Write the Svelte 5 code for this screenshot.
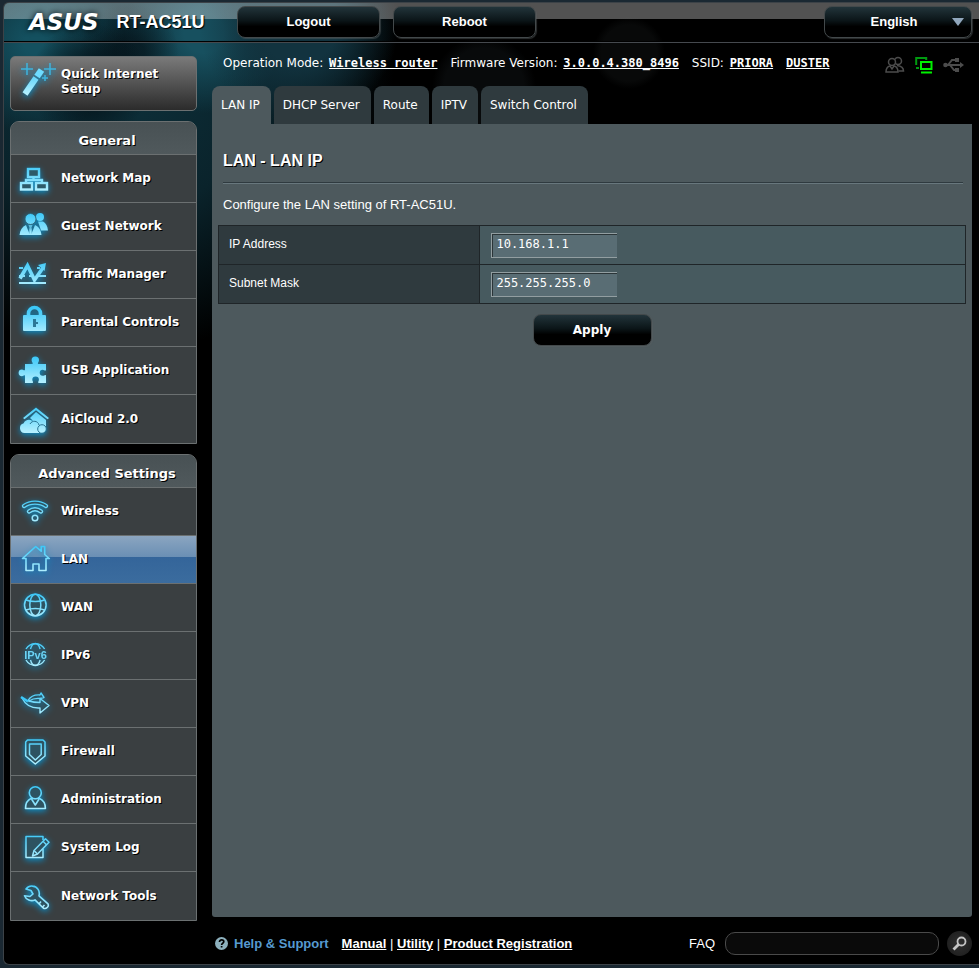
<script>
  let ip = "10.168.1.1";
  let mask = "255.255.255.0";
  let language = "English";
  let query = "";

  const tabs = ["LAN IP", "DHCP Server", "Route", "IPTV", "Switch Control"];
  let activeTab = "LAN IP";
  let activePage = "LAN";

  const CYAN = "url(#cyan)";

  const general = [
    {
      label: "Network Map",
      icon: `<g fill="#2d5a69" stroke="${CYAN}" stroke-width="2.400">
        <rect x="12" y="14" width="11" height="8"/><rect x="5" y="28" width="11" height="6.500"/><rect x="20" y="28" width="11" height="6.500"/>
        <path d="M17.500 22v3M10 28v-3h16v3" fill="none"/></g>`,
    },
    {
      label: "Guest Network",
      icon: `<g fill="${CYAN}"><circle cx="24" cy="14" r="4"/><path d="M22 18.500h5c3 1.500 4.500 5 5 9h-7z"/>
        <circle cx="14.500" cy="16" r="5.500" stroke="#2d5a69" stroke-width=".8"/><path d="M3.500 32c.6-5 2.800-8.500 6.500-10l3.500 9 1-5.500 1 5.500 3.500-9c3.700 1.500 6 5 6.500 10z"/>
        <path d="M12.500 22h4l-1 2.500 1.200 5.500-2.200 2-2.200-2 1.200-5.500z" opacity=".7"/></g>`,
    },
    {
      label: "Traffic Manager",
      icon: `<g fill="none" stroke="${CYAN}"><path d="M3 17h4M3 25h6M13 25h3M22 25h8M3 32h27M21 17h3" stroke-width="2"/>
        <path d="M4 27.500l7.500-13 7 14.500 9-13" stroke-width="3.600"/></g><path d="M22 14l8-2-1.500 8z" fill="${CYAN}"/>`,
    },
    {
      label: "Parental Controls",
      icon: `<path d="M12.500 17v-2.500a6 6 0 0 1 12 0V17" fill="none" stroke="${CYAN}" stroke-width="3.600"/>
        <rect x="7" y="16" width="23" height="16" rx="1" fill="${CYAN}"/><path d="M17 20h3v3h2v2h-2v3h-3z" fill="#2c7896"/>`,
    },
    {
      label: "USB Application",
      icon: `<path fill="${CYAN}" d="M9 17h7.500c1-1-.9-2-.9-3.800a3.700 3.700 0 0 1 7.400 0c0 1.800-1.900 2.800-.9 3.800H30v6.200c-1 .9-2-.5-3.300-.5a3 3 0 0 0 0 6c1.300 0 2.300-1.400 3.300-.5V36h-7.500c-1-1 .4-1.800.4-3.200a3.300 3.300 0 0 0-6.600 0c0 1.400 1.400 2.200.4 3.200H9v-7.500c-1-.8-1.800.7-3 .7a3.400 3.400 0 0 1 0-6.800c1.200 0 2 1.500 3 .7z"/>`,
    },
    {
      label: "AiCloud 2.0",
      icon: `<g fill="${CYAN}"><path d="M20 11.500l13 10.500-1.500 1.300L20 14.300 8.500 23.300 7 22z"/><path d="M20 16l10 8v6h-7l-9-8z"/>
        <path d="M8.500 37a5 5 0 0 1-.8-9.800c1-3 5.300-4.500 8.300-2.500 2.600-.9 6.400.6 6.800 3.600h3a4.300 4.300 0 0 1 0 8.700z"/></g>
        <g fill="none" stroke="#287493"><path d="M14 28c2-4 8-3.500 9 1"/><circle cx="26" cy="33" r="4.300"/></g>`,
    },
  ];

  const advanced = [
    {
      label: "Wireless",
      icon: `<g fill="none" stroke-linecap="round"><path d="M8 18c6-4.500 16-4.500 22 0M13 23.500c4-3 8-3 12 0" stroke="${CYAN}" stroke-width="4.400"/>
        <path d="M8 18c6-4.500 16-4.500 22 0M13 23.500c4-3 8-3 12 0" stroke="#2d5361" stroke-width="1.600"/>
        <circle cx="19" cy="30" r="2.800" stroke="${CYAN}" stroke-width="1.500"/></g>`,
    },
    {
      label: "LAN",
      icon: `<path d="M6.500 22.500l13.200-12 5.500 4.700V10.500h3.500v8l4.600 4H30v12h-7V28h-6v6.500h-7v-12z" fill="none" stroke="${CYAN}" stroke-width="1.600" stroke-linejoin="round"/>`,
    },
    {
      label: "WAN",
      icon: `<g fill="#2d5361" stroke="${CYAN}" stroke-width="1.500"><circle cx="19.300" cy="21" r="10.800"/><ellipse cx="19.300" cy="21" rx="5.500" ry="10.800"/>
        <path d="M10 16c5 2 13.600 2 18.600 0M10 26c5-2 13.600-2 18.600 0" fill="none"/></g>`,
    },
    {
      label: "IPv6",
      icon: `<g fill="none" stroke="${CYAN}" stroke-width="1.400"><path d="M10 17a10.800 10.800 0 0 1 18.600 0M10 28a10.800 10.800 0 0 0 18.600 0"/>
        <path d="M14.500 17c.8-3 2.600-5.500 4.800-5.500s4 2.500 4.800 5.500M14.500 28c.8 3 2.600 5.500 4.800 5.500s4-2.500 4.800-5.500"/></g>
        <text x="19.500" y="26.500" font-size="11" font-weight="bold" font-family="Liberation Sans, sans-serif" text-anchor="middle" fill="#6bd3f5">IPv6</text>`,
    },
    {
      label: "VPN",
      icon: `<g fill="none" stroke="${CYAN}" stroke-width="1.400" stroke-linejoin="round">
        <path d="M6 18c4 8 10 10.500 18 10v5l9-7.500-9-7v4c-5 0-8-.5-11-1.500"/>
        <path d="M12 20.500c2.500-4 6.500-6 12-5.500l1-2 3 4.500-4 1c-5-.5-8 .5-11 2.500z"/></g>
        <path d="M5 17l7 4.500" stroke="#3cc8f8" stroke-width="2.600"/>`,
    },
    {
      label: "Firewall",
      icon: `<g fill="#2d5361" stroke="${CYAN}" stroke-width="1.500" stroke-linejoin="round"><path d="M11.500 12h15.500l2 2v14L19.300 36 9.700 28V14z"/><path d="M13.500 16h11.700v10.500L19.300 32l-5.800-5.500z"/></g>`,
    },
    {
      label: "Administration",
      icon: `<g fill="#2d5361" stroke="${CYAN}" stroke-width="1.600" stroke-linejoin="round"><path d="M9.500 32.500c0-5 2-8.500 5.500-10h8.600c3.500 1.500 5.800 5 5.800 10z"/>
        <circle cx="19.300" cy="16.700" r="6"/><path d="M15.500 23l3.800 6 3.800-6" fill="none"/></g>`,
    },
    {
      label: "System Log",
      icon: `<g fill="#2d5361" stroke="${CYAN}" stroke-width="1.500" stroke-linejoin="round"><path d="M27 16v-3.500H10v21h17V25"/>
        <path d="M16.500 32l1.500-5.500L29.500 14.800l3.500 3.400L21.500 30z"/><path d="M27 17.300l3.500 3.400M18 26.500l3.500 3.500"/></g>`,
    },
    {
      label: "Network Tools",
      icon: `<g fill="#2d5361" stroke="${CYAN}" stroke-width="1.600" stroke-linejoin="round"><path d="M10 16l5 1.500 2 3.500-3 2.500-5.500-.8c1.500 4 6.500 6 10.500 4.200l8.500 8.300c2.500 1.200 5.800-1.600 4.500-4.400l-9-8c1.200-4.500-1.500-9.300-6.500-9.700-3.500-.4-5 1-6.500 2.900z"/><path d="M25 28.500l-2 2.500M28.500 32l-2 2" fill="none"/></g>`,
    },
  ];

  const menus = [
    { title: "General", items: general },
    { title: "Advanced Settings", items: advanced },
  ];
</script>

<div class="shell">
  <header>
    <div class="brand">
      <span class="logo">ASUS</span>
      <span class="model">RT-AC51U</span>
    </div>
    <button class="btn top" type="button">Logout</button>
    <button class="btn top" type="button">Reboot</button>
    <div class="language">
      <select class="btn" aria-label="Language" bind:value={language}>
        <option>English</option>
      </select>
      <svg class="arrow" width="12" height="8" viewBox="0 0 12 8"><path d="M0 0h12L6 8z" fill="#91a7bd" /></svg>
    </div>
  </header>

  <div class="page">
    <aside>
      <a class="quick" href="#qis">
        <svg class="icon" width="40" height="47" viewBox="0 0 40 47">
          <defs>
            <linearGradient id="cyan" gradientUnits="userSpaceOnUse" x1="0" y1="10" x2="0" y2="36">
              <stop offset="0" stop-color="#3cc8f8" />
              <stop offset="1" stop-color="#b4f0ff" />
            </linearGradient>
          </defs>
          <g fill="none">
            <path d="M9 36L20 20" stroke="url(#cyan)" stroke-width="6" />
            <path d="M21 18.500L25.500 12" stroke-width="6.500" stroke="#6fdcff" />
            <path d="M11 5v12M5 11h12M34 5v12M28 11h12M29 17v6M26 20h6" stroke="#3fb4de" stroke-width="1.500" />
          </g>
        </svg>
        <span>Quick Internet Setup</span>
      </a>

      {#each menus as menu}
        <nav class="menu" aria-label={menu.title}>
          <h2>{menu.title}</h2>
          {#each menu.items as item}
            <a href="#menu" class:active={activePage === item.label} on:click|preventDefault={() => (activePage = item.label)}>
              <svg class="icon" width="36" height="47" viewBox="0 0 36 47">{@html item.icon}</svg>
              <span>{item.label}</span>
            </a>
          {/each}
        </nav>
      {/each}
    </aside>

    <main>
      <div class="info">
        <span>Operation Mode: <a href="#mode">Wireless router</a></span>
        <span>Firmware Version: <a href="#firmware">3.0.0.4.380_8496</a></span>
        <span>SSID: <a href="#ssid">PRIORA</a></span>
        <a href="#ssid5">DUSTER</a>
        <div class="status">
          <svg width="20" height="18" viewBox="0 0 20 18" fill="#000" stroke="#4c4c4c" stroke-width="1.500">
            <path d="M12 9.500c4 .5 6.500 2.500 6.500 5.500h-5" /><circle cx="13" cy="5" r="3.500" />
            <path d="M1 16c0-3.500 1.500-5.500 4-6h4c2.500.5 4 2.500 4 6z" /><circle cx="7" cy="6" r="3.500" /><path d="M5 10l2 3 2-3" />
          </svg>
          <svg width="18" height="18" viewBox="0 0 18 18" fill="none" stroke="#00f000">
            <path d="M1.200 9V2h10v2" stroke="#009a10" stroke-width="2" /><path d="M1 12h3" stroke="#009a10" stroke-width="2" />
            <rect x="6" y="6" width="10.500" height="7" stroke-width="2" /><path d="M6 16.500h11" stroke-width="2" />
          </svg>
          <svg width="21" height="18" viewBox="0 0 21 18" fill="none" stroke="#4c4c4c" stroke-width="2">
            <path d="M2 9h16M5 9l4-5h4M7 9l4 5h3" /><circle cx="2.500" cy="9" r="2.300" fill="#4c4c4c" stroke="none" />
            <path d="M17 6l4 3-4 3zM12 2h4v4h-4zM12 12h4v4h-4z" fill="#4c4c4c" stroke="none" />
          </svg>
        </div>
      </div>

      <nav class="tabs" aria-label="LAN">
        {#each tabs as tab}
          <a href="#tab" class:active={activeTab === tab} on:click|preventDefault={() => (activeTab = tab)}>{tab}</a>
        {/each}
      </nav>

      <form class="panel" on:submit|preventDefault>
        <h1>LAN - LAN IP</h1>
        <hr />
        <p>Configure the LAN setting of RT-AC51U.</p>
        <table>
          <tbody>
            <tr>
              <th scope="row"><label for="ip">IP Address</label></th>
              <td><input id="ip" type="text" bind:value={ip} /></td>
            </tr>
            <tr>
              <th scope="row"><label for="mask">Subnet Mask</label></th>
              <td><input id="mask" type="text" bind:value={mask} /></td>
            </tr>
          </tbody>
        </table>
        <button class="btn apply" type="submit">Apply</button>
      </form>

      <footer>
        <svg width="13" height="13" viewBox="0 0 13 13">
          <circle cx="6.500" cy="6.500" r="6.500" fill="#8db0bd" />
          <path d="M4.500 5c0-3 4.300-2.700 4.300-.2 0 1.500-2.200 1.500-2.200 3.200M6.600 9v1.600" fill="none" stroke="#000" stroke-width="1.700" />
        </svg>
        <strong>Help &amp; Support</strong>
        <span class="links">
          <a href="#manual">Manual</a> | <a href="#utility">Utility</a> | <a href="#register">Product Registration</a>
        </span>
        <label for="faq">FAQ</label>
        <input id="faq" type="text" bind:value={query} />
        <button class="search" type="button" aria-label="Search">
          <svg width="15" height="15" viewBox="0 0 15 15" fill="none" stroke="#c4c4c4">
            <circle cx="9.500" cy="5.500" r="4" stroke-width="1.800" /><path d="M6.500 8.500L1.500 13.500" stroke-width="2.800" />
          </svg>
        </button>
      </footer>
    </main>
  </div>
</div>

<style>
  :global(body) {
    margin: 0;
    background: #1a2832;
  }

  .shell {
    --sans: "Liberation Sans", Arial, sans-serif;
    --wide: "DejaVu Sans", Verdana, sans-serif;
    --mono: "DejaVu Sans Mono", "Lucida Console", monospace;
    --line: #6b7071;
    --panel: #4d595d;
    display: flex;
    flex-direction: column;
    box-sizing: border-box;
    min-height: calc(100vh - 5px);
    margin: 2px 0 3px 3px;
    border: 1px solid #3c4247;
    border-right: none;
    border-radius: 6px 0 0 6px;
    color: #fff;
    font: 13px var(--sans);
    background:
      radial-gradient(circle at 85px 80px, rgba(4, 16, 22, 0.85) 15px, transparent 60px),
      radial-gradient(circle at 125px 50px, rgba(4, 14, 20, 0.6) 15px, transparent 50px),
      radial-gradient(circle at 295px 20px, #12333f 40px, transparent 100px),
      radial-gradient(circle at 30px 40px, #14505f 10px, transparent 90px),
      radial-gradient(circle at 200px 30px, #17505f 20px, transparent 80px),
      radial-gradient(circle at 480px 85px, #080a0b 40px, transparent 52px),
      radial-gradient(circle at 625px 50px, #080909 28px, transparent 36px),
      radial-gradient(ellipse at 110px 60px, #0d323d 0, #0a232b 150px, transparent 280px),
      #000;
  }

  a {
    color: inherit;
  }

  header {
    display: flex;
    align-items: center;
    height: 37px;
    gap: 13px;
    padding: 0 7px 2px 25px;
    border-bottom: 1px solid #45494e;
    box-shadow: inset 0 -1px #000;
    border-radius: 5px 0 0 0;
    background: linear-gradient(rgba(255, 255, 255, 0.32) 16px, transparent 16px);
  }

  .brand {
    display: flex;
    align-items: center;
    gap: 18px;
    flex: 0 0 195px;
    font-weight: bold;
  }

  .logo {
    font: italic bold 23px/30px var(--wide);
    text-shadow: 0 0 6px #000;
  }

  .model {
    font-size: 18px;
    line-height: 30px;
    text-shadow: 1px 1px 1px #000;
  }

  .btn {
    box-sizing: border-box;
    height: 32px;
    padding: 0;
    border: 1px solid #43494b;
    border-radius: 8px;
    color: #fff;
    font: bold 13px var(--sans);
    text-align: center;
    background: linear-gradient(#22343a, #0b1518 45%, #000 65%);
    box-shadow: 1px 1px 1px rgba(90, 95, 98, 0.5);
    cursor: pointer;
  }

  .top {
    width: 143px;
  }

  .language {
    position: relative;
    margin-left: auto;
  }

  .language select {
    width: 148px;
    padding-right: 8px;
    appearance: none;
    text-align-last: center;
  }

  .arrow {
    position: absolute;
    top: 12px;
    right: 8px;
    pointer-events: none;
  }

  .page {
    display: flex;
    flex: 1;
    gap: 15px;
    padding: 0 7px 0 6px;
  }

  aside {
    display: flex;
    flex-direction: column;
    flex: 0 0 187px;
    gap: 10px;
    padding-top: 13px;
    font: bold 12px/15px var(--wide);
    text-shadow: 1px 1px 0 #000;
  }

  aside a {
    display: flex;
    align-items: center;
    color: #fff;
    text-decoration: none;
  }

  .icon {
    flex: none;
    overflow: visible;
    text-shadow: none;
    filter: drop-shadow(0 2px 3px #0a8fc8);
  }

  .quick {
    box-sizing: border-box;
    height: 55px;
    padding: 0 30px 4px 5px;
    gap: 5px;
    border: 1px solid #6b7071;
    border-radius: 5px;
    background: linear-gradient(#7a7a7a, #2b2b2b);
  }

  .menu {
    border: 1px solid var(--line);
    border-radius: 9px 9px 0 0;
    background: #3a3f41;
  }

  .menu h2 {
    margin: 0;
    padding: 5px 0 0 7px;
    border-radius: 8px 8px 0 0;
    font-size: 13px;
    line-height: 27px;
    text-align: center;
    background: linear-gradient(#485154, #50595c);
  }

  .menu a {
    height: 47px;
    padding-left: 5px;
    gap: 9px;
    border-top: 1px solid var(--line);
  }

  .menu a:last-child {
    height: 48px;
  }

  .menu a.active {
    background: linear-gradient(#8ba5c0, #6a8fb4 45%, #34659a 45%, #3b6c9e);
  }

  main {
    display: flex;
    flex-direction: column;
    flex: 1;
    min-width: 0;
  }

  .info {
    display: flex;
    align-items: center;
    box-sizing: border-box;
    height: 43px;
    gap: 13px;
    padding: 0 0 3px 11px;
    font: 12px var(--wide);
    white-space: nowrap;
  }

  .info a {
    font: bold 12px var(--mono);
  }

  .info span a {
    margin-left: 2px;
  }

  .status {
    display: flex;
    gap: 10px;
    margin-left: auto;
    padding: 4px 8px 0 0;
  }

  .tabs {
    display: flex;
    gap: 3px;
    font: 12px/38px var(--wide);
  }

  .tabs a {
    padding: 0 11px 0 9px;
    border-radius: 8px 8px 0 0;
    text-decoration: none;
    background: #2f3a3e;
  }

  .tabs a.active {
    background: var(--panel);
  }

  .panel {
    display: flex;
    flex-direction: column;
    flex: 1;
    padding: 27px 6px 20px;
    border-radius: 0 0 3px 3px;
    background: var(--panel);
  }

  h1 {
    margin: 0 5px;
    font-size: 16px;
    line-height: 20px;
    text-shadow: 1px 1px 0 #000;
  }

  hr {
    height: 1px;
    margin: 11px 3px 0 5px;
    border: none;
    border-top: 1px solid #2f3a3f;
    background: #68777d;
  }

  p {
    margin: 11px 5px 10px;
    line-height: 20px;
  }

  table {
    width: 100%;
    border-collapse: collapse;
    font-size: 12px;
  }

  th,
  td {
    height: 38px;
    padding: 0 11px;
    border: 1px solid #1f2528;
  }

  th {
    box-sizing: border-box;
    width: 35%;
    padding: 0 10px 2px;
    font-weight: normal;
    text-align: left;
    background: #2f3a3e;
  }

  td {
    background: #475a5f;
  }

  td input {
    display: block;
    box-sizing: border-box;
    width: 126px;
    height: 25px;
    padding: 0 4px 2px;
    border: solid #929ea1;
    border-width: 1px 0 1px 1px;
    color: #fff;
    font: 12px var(--mono);
    background: #596d74;
    box-shadow: inset 1px 1px #2b3538;
  }

  .apply {
    align-self: center;
    width: 119px;
    margin: 10px 0 0;
    font: bold 12px var(--wide);
  }

  footer {
    display: flex;
    align-items: center;
    height: 42px;
    padding: 5px 0 0 3px;
  }

  footer strong {
    margin: 0 13px 0 6px;
    color: #569ad0;
  }

  .links {
    flex: 1;
  }

  .links a {
    font-weight: bold;
  }

  footer input {
    box-sizing: border-box;
    width: 214px;
    height: 23px;
    margin: 0 8px 0 10px;
    padding: 0 10px;
    border: 1px solid #4a4a4a;
    border-radius: 10px;
    color: #fff;
    font: 13px var(--sans);
    background: #0a0a0a;
  }

  .search {
    display: grid;
    place-items: center;
    width: 25px;
    height: 25px;
    padding: 0;
    border: none;
    border-radius: 50%;
    background: radial-gradient(#303030, #1a1a1a);
  }
</style>
